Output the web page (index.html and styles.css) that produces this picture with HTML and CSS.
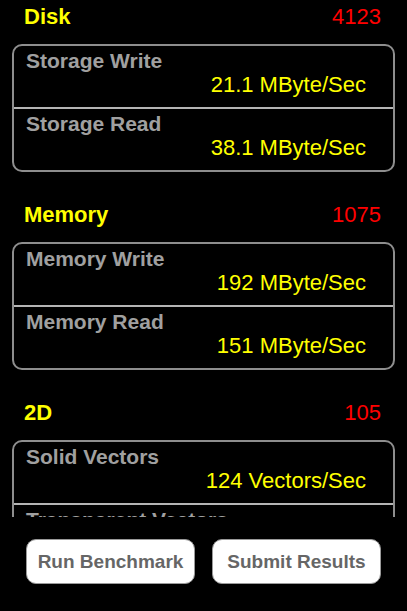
FILE: index.html
```html
<!DOCTYPE HTML><html>
<head>
  <meta name="viewport" content="width=device-width, initial-scale=1">
  <title>Benchmark</title>
  <link rel="stylesheet" href="styles.css">
</head>
<body>
  <div class="results">
    <div class="section">
      <div class="head"><span class="name">Disk</span><span class="score">4123</span></div>
      <div class="box">
        <div class="row"><p class="label">Storage Write</p><p class="value">21.1 MByte/Sec</p></div>
        <div class="row"><p class="label">Storage Read</p><p class="value">38.1 MByte/Sec</p></div>
      </div>
    </div>
    <div class="section">
      <div class="head"><span class="name">Memory</span><span class="score">1075</span></div>
      <div class="box">
        <div class="row"><p class="label">Memory Write</p><p class="value">192 MByte/Sec</p></div>
        <div class="row"><p class="label">Memory Read</p><p class="value">151 MByte/Sec</p></div>
      </div>
    </div>
    <div class="section">
      <div class="head"><span class="name">2D</span><span class="score">105</span></div>
      <div class="box">
        <div class="row"><p class="label">Solid Vectors</p><p class="value">124 Vectors/Sec</p></div>
        <div class="row"><p class="label">Transparent Vectors</p><p class="value">98 Vectors/Sec</p></div>
      </div>
    </div>
  </div>
  <div class="toolbar">
    <button class="btn">Run Benchmark</button>
    <button class="btn">Submit Results</button>
  </div>
</body>
</html>
```

FILE: styles.css
```css
html {font-family: "Liberation Sans", Arial, sans-serif; background: #000;}
body {margin: 0; width: 407px; height: 611px; background: #000; overflow: hidden;}
p {margin: 0;}

.results {height: 517px; overflow: hidden;}
.section {margin-bottom: 26px;}
.head {height: 44px; box-sizing: border-box; padding: 6px 26px 0 24px; display: flex; justify-content: space-between;
  font-size: 22px; line-height: 22px;}
.name {color: #ffff00; font-weight: bold;}
.score {color: #ff0000;}

.box {margin: 0 12px; border: 2px solid #8e8e8e; border-radius: 10px;}
.row {padding: 3px 27px 10px 12px;}
.row + .row {border-top: 2px solid #b4b4b4;}
.label {color: #a0a0a0; font-weight: bold; font-size: 21px; line-height: 24px;}
.value {color: #ffff00; font-size: 22px; line-height: 24px; text-align: right;}

.toolbar {height: 94px; box-sizing: border-box; padding: 22px 26px 0 26px; display: flex; gap: 17px;}
.btn {width: 169px; height: 45px; background: #fff; border: 1px solid #9a9a9a; border-radius: 10px;
  font-family: "Liberation Sans", Arial, sans-serif; font-weight: bold; font-size: 19px; color: #666; padding: 0;}
```
